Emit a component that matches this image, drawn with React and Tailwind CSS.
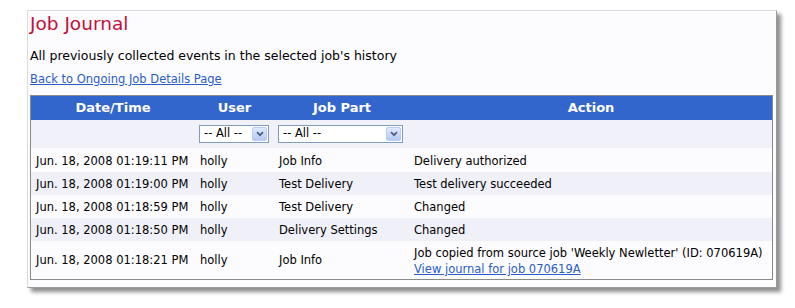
import React from "react";

const rows = [
  ["Jun. 18, 2008 01:19:11 PM", "holly", "Job Info", "Delivery authorized", "h-[24px]"],
  ["Jun. 18, 2008 01:19:00 PM", "holly", "Test Delivery", "Test delivery succeeded", "h-[23px]"],
  ["Jun. 18, 2008 01:18:59 PM", "holly", "Test Delivery", "Changed", "h-[23px]"],
  ["Jun. 18, 2008 01:18:50 PM", "holly", "Delivery Settings", "Changed", "h-[23px]"],
];

function Select({ w }) {
  return (
    <div className={`${w} h-[18px] border border-[#7f9db9] bg-white flex items-center justify-between pl-[4px] pr-[1px]`}>
      <span className="text-[11.5px] leading-none text-black">-- All --</span>
      <span className="w-[15px] h-[14px] rounded-[2px] bg-gradient-to-b from-[#dfe9fc] to-[#b5c9f2] border border-[#b9ccf3] flex items-center justify-center">
        <svg width="8" height="6" viewBox="0 0 8 6">
          <path d="M1 1.2 L4 4.2 L7 1.2" fill="none" stroke="#4d6185" strokeWidth="1.8" />
        </svg>
      </span>
    </div>
  );
}

export default function App() {
  return (
    <div className="w-[795px] h-[308px] bg-white pt-[10px] pl-[27px] font-['DejaVu_Sans',sans-serif]" >
      <div className="w-[750px] h-[278px] bg-[#fcfbfe] border border-t-[#dcdcdc] border-l-[#dcdcdc] border-r-[#9a9a9a] border-b-[#9a9a9a] shadow-[4px_4px_4px_rgba(0,0,0,0.45)] pl-[2px] pr-[3px]">
        <div className="text-[18.5px] leading-[22px] text-[#c3103a] mt-[2px]">Job Journal</div>
        <div className="text-[12.5px] leading-[18px] text-black mt-[12px]">All previously collected events in the selected job's history</div>
        <div className="mt-[7px] text-[11.5px] leading-[14px]">
          <a href="#" className="text-[#2a5dc8] underline">Back to Ongoing Job Details Page</a>
        </div>
        <div className="mt-[9px] border border-[#8a8a8a] text-[11.5px] text-black">
          <div className="grid grid-cols-[164px_79px_136px_1fr] h-[24px] bg-[#3366cc] text-white font-bold text-[13px] items-center text-center">
            <div>Date/Time</div>
            <div>User</div>
            <div>Job Part</div>
            <div>Action</div>
          </div>
          <div className="grid grid-cols-[164px_79px_136px_1fr] h-[28px] bg-[#f1f1f9] items-center">
            <div></div>
            <div className="pl-[4px]"><Select w="w-[70px]" /></div>
            <div className="pl-[4px]"><Select w="w-[125px]" /></div>
            <div></div>
          </div>
          {rows.map((r, i) => (
            <div key={i} className={`grid grid-cols-[164px_79px_136px_1fr] ${r[4]} items-center pt-[3px] ${i % 2 ? "bg-[#f0f0f8]" : "bg-[#fcfbfe]"}`}>
              <div className="pl-[5px]">{r[0]}</div>
              <div className="pl-[5px]">{r[1]}</div>
              <div className="pl-[5px]">{r[2]}</div>
              <div className="pl-[4px]">{r[3]}</div>
            </div>
          ))}
          <div className="grid grid-cols-[164px_79px_136px_1fr] h-[38px] items-center pt-[2px] bg-[#fcfbfe]">
            <div className="pl-[5px]">Jun. 18, 2008 01:18:21 PM</div>
            <div className="pl-[5px]">holly</div>
            <div className="pl-[5px]">Job Info</div>
            <div className="pl-[4px] leading-[16px]">
              <div>Job copied from source job 'Weekly Newletter' (ID: 070619A)</div>
              <a href="#" className="text-[#2a5dc8] underline">View journal for job 070619A</a>
            </div>
          </div>
        </div>
      </div>
    </div>
  );
}
